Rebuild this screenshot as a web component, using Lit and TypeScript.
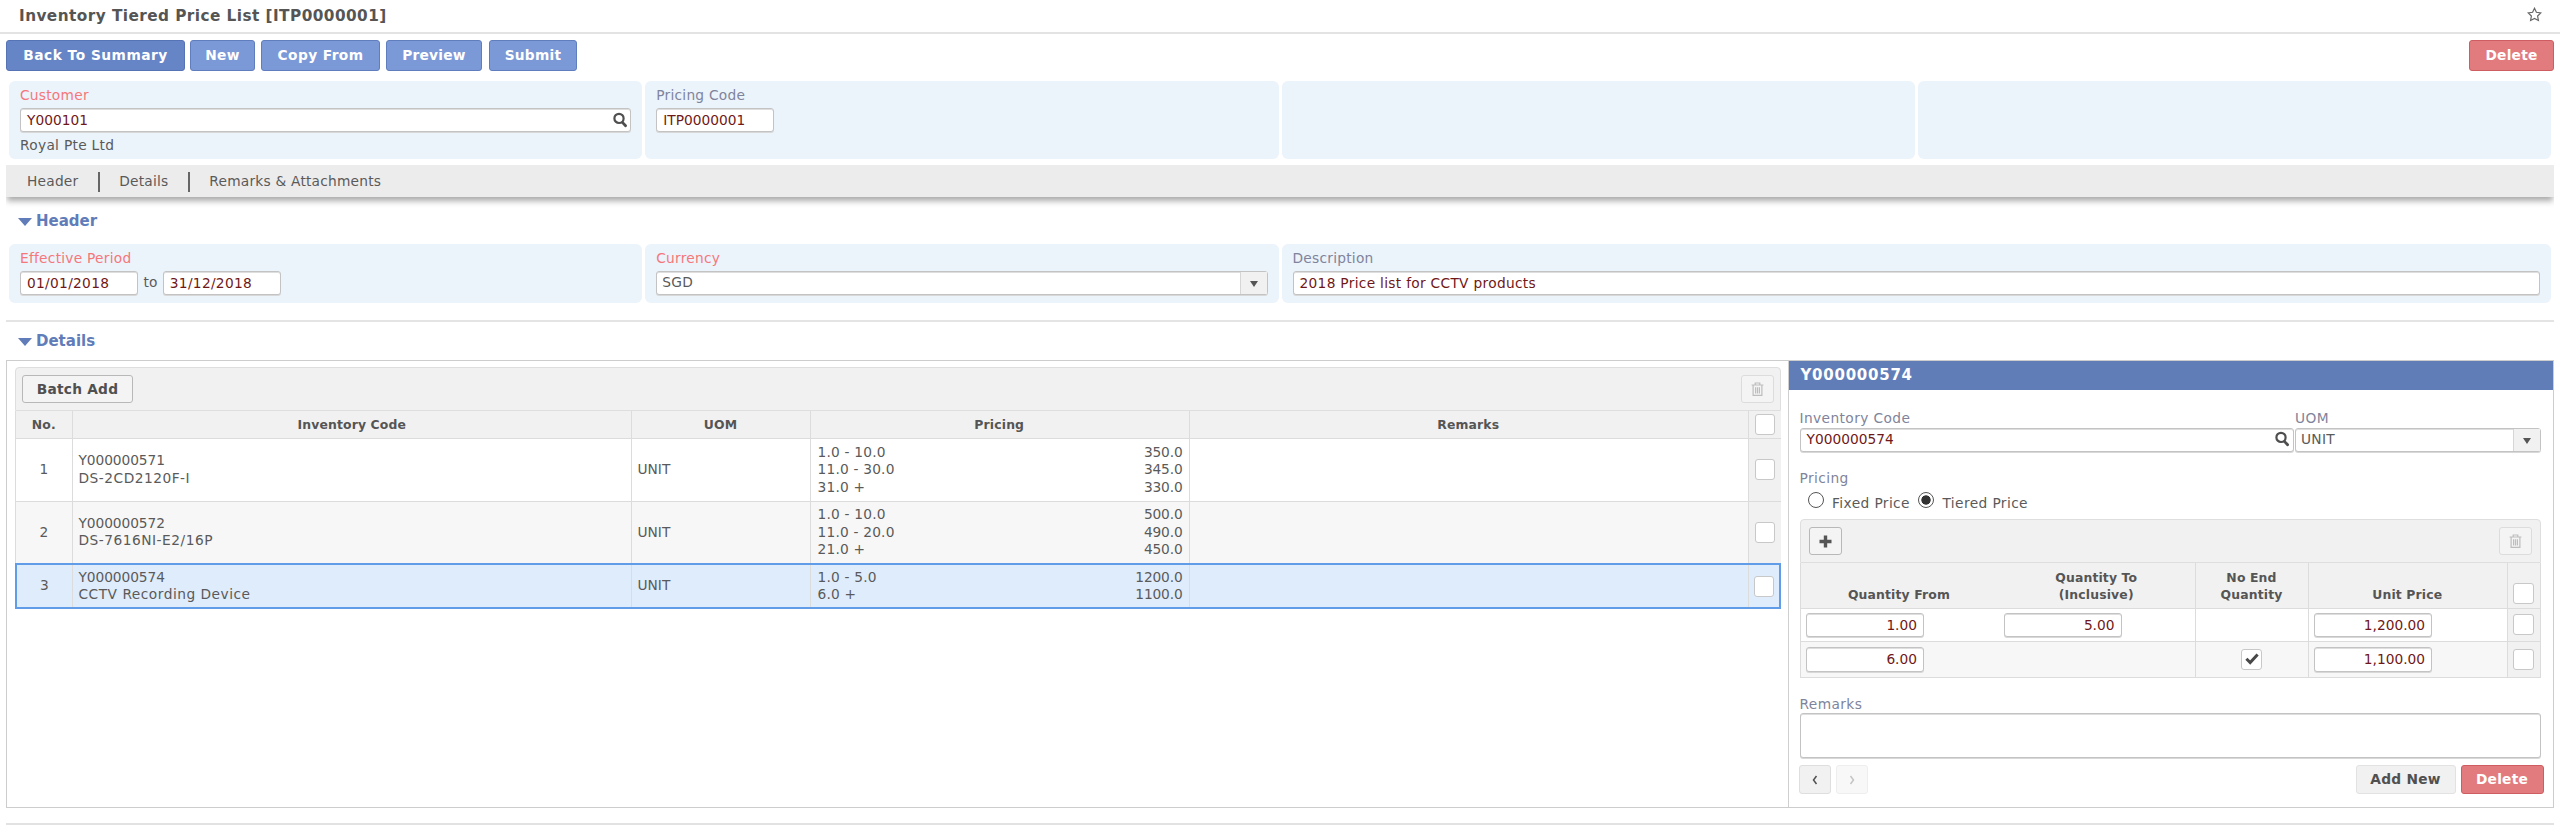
import { LitElement, html, css, svg, nothing } from "lit";
import { customElement } from "lit/decorators.js";

const search = html`<svg class="search" viewBox="0 0 16 18"><circle cx="7" cy="7.4" r="4.6" fill="none" stroke="#4f4f4f" stroke-width="2.2"/><path d="M10.4 11.4 13.6 14.8" stroke="#4f4f4f" stroke-width="2.8" stroke-linecap="round"/></svg>`;
const trash = html`<svg width="13" height="14" viewBox="0 0 13 14" fill="none" stroke="#bdbdbd" stroke-width="1.2"><path d="M.6 3h11.8M4.2 2.8V1h4.6v1.8M2.1 3.2v10.2h8.8V3.2M4.6 5.2v6.2M6.5 5.2v6.2M8.4 5.2v6.2"/></svg>`;
const plus = html`<svg width="13" height="13" viewBox="0 0 13 13"><path d="M6.5.5v12M.5 6.5h12" stroke="#555" stroke-width="3.4"/></svg>`;
const star = html`<svg width="15" height="15" viewBox="0 0 15 15"><path d="M7.5 1.3 9.4 5.3l4.4.6-3.2 3.1.8 4.5-3.9-2.1-3.9 2.1.8-4.5L1.2 5.9l4.4-.6z" fill="#fff" stroke="#666" stroke-width="1.2"/></svg>`;
const tick = html`<svg width="14" height="12" viewBox="0 0 14 12"><path d="M1.4 5.8 5.2 9.6 12.6 1.6" fill="none" stroke="#484848" stroke-width="3"/></svg>`;
const chevron = (d: string) => html`<svg width="6" height="10" viewBox="0 0 6 10" fill="none" stroke="currentColor" stroke-width="1.5">${svg`<path d=${d} />`}</svg>`;

const items = [
  { code: "Y000000571", name: "DS-2CD2120F-I", tiers: [["1.0 - 10.0", "350.0"], ["11.0 - 30.0", "345.0"], ["31.0 +", "330.0"]] },
  { code: "Y000000572", name: "DS-7616NI-E2/16P", tiers: [["1.0 - 10.0", "500.0"], ["11.0 - 20.0", "490.0"], ["21.0 +", "450.0"]] },
  { code: "Y000000574", name: "CCTV Recording Device", tiers: [["1.0 - 5.0", "1200.0"], ["6.0 +", "1100.0"]] },
];
const select = (value: string) => html`<div class="field select"><span class="w grow">${value}</span><span class="drop"><i></i></span></div>`;
const section = (name: string) => html`<div class="section"><i></i><b>${name}</b></div>`;

@customElement("app-root")
export class AppRoot extends LitElement {
  static styles = css`
    :host { display: block; width: 2560px; height: 832px; overflow: hidden; background: #fff; color: #5a5a5a; font: 13.75px/17.5px "DejaVu Sans", Verdana, sans-serif; }
    * { box-sizing: border-box; }
    b { font-weight: bold; }
    .w { letter-spacing: .3px; }
    .grow { flex: 1; }
    .title { height: 34px; border-bottom: 2px solid #e3e3e3; display: flex; justify-content: space-between; padding: 7px 18px 0 19px; font-size: 15.3px; font-weight: bold; color: #555; }
    .title b { letter-spacing: .44px; padding-top: 1px; }
    .bar { display: flex; padding: 6px 6px 0; height: 47px; align-items: flex-start; }
    .btn { height: 31px; border: 1.5px solid #607dbd; border-radius: 3px; background: #7b98d7; color: #fff; font-weight: bold; display: flex; align-items: center; justify-content: center; letter-spacing: .25px; white-space: nowrap; padding-top: 1px; }
    .btn.back { background: #6685c7; border-color: #5673b5; width: 179px; margin-right: 5px; letter-spacing: .5px; }
    .new { width: 65px; margin-right: 6px; } .btn.copy { width: 119px; margin-right: 6px; letter-spacing: .4px; } .prev { width: 96px; margin-right: 7px; } .submit { width: 88px; }
    .btn.del { background: #e27b7d; border-color: #cd5d61; }
    .bar .del { width: 85px; margin-left: auto; }
    .panels { display: grid; grid-template-columns: repeat(4, 1fr); gap: 3px; padding: 0 9px; }
    .panel { background: #ebf3fb; border-radius: 6px; padding: 6px 11px 0; }
    .one .panel { height: 78px; } .two .panel { height: 59px; }
    .span { grid-column: span 2; }
    .label { color: #80849b; letter-spacing: .25px; height: 17.5px; margin-bottom: 3px; }
    .req { color: #f6777a; }
    .field { background: #fff; border: 1px solid #c3c3c3; border-radius: 3px; box-shadow: inset 0 1px 0 #dedede, 0 1px 0 #d8d8d8; height: 24.5px; color: #701818; padding: 1px 6px 0; display: flex; align-items: center; font: inherit; }
    .num { width: 118px; justify-content: flex-end; } .short { width: 118px; }
    .dates .short { letter-spacing: .3px; }
    .search { width: 16px; height: 18px; margin: -1px -3.5px 0 auto; }
    .select { padding: 0 0 0 5px; color: #5a5a5a; }
    .drop { width: 27px; height: 21.5px; border-left: 1px solid #d6d6d6; background: #f1f1f1; display: flex; align-items: center; justify-content: center; }
    .drop i { border: 4.5px solid transparent; border-top: 6px solid #555; border-bottom: 0; margin-top: 3px; }
    .under { padding-top: 5px; letter-spacing: .3px; }
    .dates { display: flex; gap: 5.5px; align-items: center; }
    .tabs { margin: 6px 6px 0; height: 32px; background: #ececec; box-shadow: 0 5px 6px -1px #aaa; display: flex; align-items: center; padding: 1px 0 0 21px; letter-spacing: .22px; clip-path: inset(0 0 -14px 0); }
    .tabs i { width: 1.5px; height: 20px; background: #666; margin: 0 19.7px; }
    .section { display: flex; align-items: center; color: #607cb9; font-size: 15px; padding-left: 18px; gap: 4px; }
    .section i { border: 7px solid transparent; border-top: 8px solid #607cb9; border-bottom: 0; }
    .s1 { height: 47px; padding-top: 3px; display: flex; align-items: center; }
    .rule { margin: 17px 6px 0; height: 2px; background: #e4e4e4; }
    .s2 { height: 38px; display: flex; align-items: center; padding-top: 1px; }
    .box { margin: 0 6px; height: 448px; border: 1.5px solid #cdcdcd; display: flex; }
    .left { width: 1781.5px; padding: 6px 7px 0 8px; border-right: 1.5px solid #cfcfcf; }
    .tool { height: 44px; border: 1px solid #dedede; border-radius: 4px 4px 0 0; background: #f1f1f1; display: flex; justify-content: space-between; align-items: center; padding: 0 6px; }
    .btn.plain { background: #f4f4f4; color: #505050; border: 1.5px solid #b8b8b8; height: 28px; }
    .batch { width: 111px; }
    .btn.off { border-color: #dcdcdc; }
    .icon { width: 33px; padding-top: 0; }
    .row { display: grid; grid-template-columns: 57px 559px 178.5px 379px 559px 32.5px; border: 1px solid #dcdcdc; border-top: 0; }
    .row > div { border-right: 1px solid #dcdcdc; padding: 0 6px 0 5.5px; display: flex; flex-direction: column; justify-content: center; }
    .row > div:last-child { border-right: 0; background: #f1f1f1; align-items: center; padding: 0; }
    .row > .no { align-items: center; }
    .code { letter-spacing: -.08px; } .name { letter-spacing: .5px; }
    .head { height: 28px; background: #f1f1f1; font-weight: bold; font-size: 12.4px; text-align: center; color: #555; line-height: 17.5px; letter-spacing: .15px; }
    .tall { height: 62.5px; } .alt { background: #f7f7f7; }
    .row.on { height: 46px; background: #dfecfc; border: 2px solid #619ce8; margin-top: -1px; grid-template-columns: 56px 559px 178.5px 379px 559px 30.5px; }
    .row.on > div:last-child { background: none; }
    .tier { display: flex; justify-content: space-between; padding-left: 1.5px; letter-spacing: .2px; }
    .amt { letter-spacing: -.15px; }
    .check { width: 20.5px; height: 21px; background: #fff; border: 1.5px solid #c8c8c8; border-radius: 3px; display: flex; align-items: center; justify-content: center; flex: none; }
    .right { flex: 1; }
    .caption { height: 29px; background: #617db8; color: #fff; font-weight: bold; font-size: 15px; padding: 5.5px 12px; letter-spacing: .75px; }
    .form { padding: 20px 6px 0 11px; }
    .pair { display: grid; grid-template-columns: 494px 246px; gap: 1.5px; }
    .pair .field { padding-top: 0; }
    .form .label { margin-bottom: 0; letter-spacing: .4px; }
    .form .pr { margin-top: 18px; }
    .radios { display: flex; padding: 3px 0 0 8.5px; height: 31.5px; letter-spacing: .4px; }
    .radio { width: 16px; height: 16px; border: 1.5px solid #555; border-radius: 50%; background: #fff; margin: 1px 8px 0 0; }
    .radio.sel { background: radial-gradient(#333 0 4.3px, #fff 5px); margin-left: 8.5px; }
    .radios span { padding-top: 4px; }
    .grid { width: 741px; }
    .grid .row { grid-template-columns: 197.5px 198px 112.5px 199px 1fr; }
    .grid .row > div { flex-direction: row; justify-content: flex-start; align-items: center; }
    .grid .row > div:first-child { border-right: 0; }
    .grid .row > div:last-child, .grid .row > .mid { justify-content: center; }
    .grid .head { height: 45.5px; }
    .grid .head > div, .grid .row.head > div:last-child { align-items: flex-end; justify-content: center; padding-bottom: 4px; }
    .r1 { height: 33.5px; } .r2 { height: 35.5px; }
    .grid .tool { padding: 0 8px; }
    .rem { margin-top: 18px; padding-top: 0; }
    .area { height: 45px; width: 741px; margin-top: 0; }
    .foot { display: flex; margin: 7px 0 0 -1px; width: 745px; }
    .foot .btn { height: 29px; padding-top: 0; }
    .foot .nav { width: 32px; border-color: #dedede; background: #f1f1f1; margin-right: 5.5px; }
    .foot .dis { color: #c4c4c4; background: #f8f8f8; border-color: #eee; }
    .foot .add { width: 100px; margin-left: auto; border-color: #e2e2e2; background: #f1f1f1; margin-right: 5px; }
    .foot .del { width: 83px; }
    .end { margin: 15px 6px 0; height: 2px; background: #e2e2e2; }
  `;

  render() {
    return html`
      <div class="title"><b>Inventory Tiered Price List [ITP0000001]</b>${star}</div>
      <div class="bar">
        <div class="btn back">Back To Summary</div><div class="btn new">New</div><div class="btn copy">Copy From</div>
        <div class="btn prev">Preview</div><div class="btn submit">Submit</div><div class="btn del">Delete</div>
      </div>
      <div class="panels one">
        <div class="panel"><div class="label req">Customer</div><div class="field">Y000101${search}</div><div class="under">Royal Pte Ltd</div></div>
        <div class="panel"><div class="label">Pricing Code</div><div class="field short">ITP0000001</div></div>
        <div class="panel"></div><div class="panel"></div>
      </div>
      <div class="tabs"><span>Header</span><i></i><span>Details</span><i></i><span>Remarks &amp; Attachments</span></div>
      <div class="s1">${section("Header")}</div>
      <div class="panels two">
        <div class="panel"><div class="label req">Effective Period</div><div class="dates"><div class="field short">01/01/2018</div><span>to</span><div class="field short">31/12/2018</div></div></div>
        <div class="panel"><div class="label req">Currency</div>${select("SGD")}</div>
        <div class="panel span"><div class="label">Description</div><div class="field w">2018 Price list for CCTV products</div></div>
      </div>
      <div class="rule"></div>
      <div class="s2">${section("Details")}</div>
      <div class="box">
        <div class="left">
          <div class="tool"><div class="btn plain batch">Batch Add</div><div class="btn plain off icon">${trash}</div></div>
          <div class="row head"><div>No.</div><div>Inventory Code</div><div>UOM</div><div>Pricing</div><div>Remarks</div><div><span class="check"></span></div></div>
          ${items.map((it, i) => html`
            <div class="row ${["tall", "tall alt", "on"][i]}">
              <div class="no">${i + 1}</div><div><span class="code">${it.code}</span><span class="name">${it.name}</span></div><div>UNIT</div>
              <div>${it.tiers.map(([q, p]) => html`<span class="tier"><span>${q}</span><span class="amt">${p}</span></span>`)}</div>
              <div></div><div><span class="check"></span></div>
            </div>`)}
        </div>
        <div class="right">
          <div class="caption">Y000000574</div>
          <div class="form">
            <div class="pair">
              <div><div class="label">Inventory Code</div><div class="field">Y000000574${search}</div></div>
              <div><div class="label">UOM</div>${select("UNIT")}</div>
            </div>
            <div class="label pr">Pricing</div>
            <div class="radios"><i class="radio"></i><span>Fixed Price</span><i class="radio sel"></i><span>Tiered Price</span></div>
            <div class="grid">
              <div class="tool"><div class="btn plain icon">${plus}</div><div class="btn plain off icon">${trash}</div></div>
              <div class="row head"><div>Quantity From</div><div>Quantity To<br>(Inclusive)</div><div>No End<br>Quantity</div><div>Unit Price</div><div><span class="check"></span></div></div>
              ${[["1.00", "5.00", "1,200.00"], ["6.00", "", "1,100.00"]].map(([from, to, price], i) => html`
                <div class="row ${i ? "r2 alt" : "r1"}">
                  <div><span class="field num">${from}</span></div>
                  <div>${to ? html`<span class="field num">${to}</span>` : nothing}</div>
                  <div class="mid">${to ? nothing : html`<span class="check">${tick}</span>`}</div>
                  <div><span class="field num">${price}</span></div>
                  <div><span class="check"></span></div>
                </div>`)}
            </div>
            <div class="label rem">Remarks</div>
            <div class="field area"></div>
            <div class="foot">
              <div class="btn plain nav">${chevron("M4.5 1 1.5 5l3 4")}</div><div class="btn plain nav dis">${chevron("M1.5 1l3 4-3 4")}</div>
              <div class="btn plain add">Add New</div><div class="btn del">Delete</div>
            </div>
          </div>
        </div>
      </div>
      <div class="end"></div>`;
  }
}
